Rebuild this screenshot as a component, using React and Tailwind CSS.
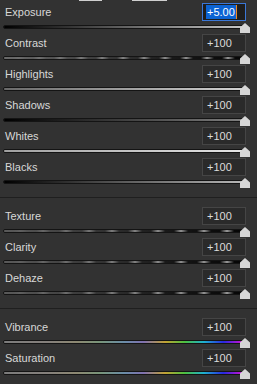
import React from "react";

const tracks = {
  exposure: "bg-[linear-gradient(to_right,#000000,#3a3a3a_30%,#c8c8c8)]",
  contrast:
    "bg-[linear-gradient(to_right,#6a6a6a,rgba(106,106,106,0.2)_70%,rgba(106,106,106,0)),repeating-linear-gradient(to_right,#050505_0px,#050505_8px,#9a9a9a_14px,#050505_21px)]",
  highlights: "bg-[linear-gradient(to_right,#6a6a6a,#d2d2d2)]",
  shadows: "bg-[linear-gradient(to_right,#000000,#808080)]",
  whites: "bg-[linear-gradient(to_right,#a0a0a0,#e6e6e6)]",
  blacks: "bg-[linear-gradient(to_right,#000000,#b8b8b8)]",
  texture:
    "bg-[linear-gradient(to_right,#5a5a5a,rgba(90,90,90,0.2)_70%,rgba(90,90,90,0)),repeating-linear-gradient(to_right,#050505_0px,#050505_9px,#a0a0a0_16px,#050505_23px)]",
  vivid:
    "bg-[linear-gradient(to_right,#7c7c7c_0%,#85807c_18%,#8d8872_30%,#78957a_40%,#6a8ca8_50%,#8070b0_58%,#c2a232_67%,#4cc040_75%,#1eb0d0_83%,#2828e0_91%,#e010d0_100%)]",
};

const Slider = ({ label, value, track, active = false }) => (
  <div className="h-[31px] pl-[5px] pr-[11px]">
    <div className="flex h-[18px] items-center justify-between">
      <span className="text-[11px] leading-none text-[#d8d8d8]">{label}</span>
      {active ? (
        <div className="flex h-[18px] w-[44px] items-center border border-[#3b77d6] bg-[#1e1e1e] pl-[3px]">
          <span className="bg-[#0c63d3] px-px text-[11px] leading-[14px] text-white">{value}</span>
          <span className="h-[14px] w-px bg-[#f08a24]" />
        </div>
      ) : (
        <div className="flex h-[18px] w-[44px] items-center border border-[#454545] bg-[#2a2a2a] pl-[4px]">
          <span className="text-[11px] leading-none text-[#dcdcdc]">{value}</span>
        </div>
      )}
    </div>
    <div className="relative ml-[-2px] mt-[4px] h-[4px] rounded-full border border-[#141414]">
      <div className={`h-full w-full rounded-full ${track}`} />
      <div className="absolute right-[-5px] top-[-3px] h-[10px] w-[10px] bg-[#d6d6d6] [clip-path:polygon(50%_0,100%_45%,100%_100%,0_100%,0_45%)]" />
    </div>
  </div>
);

const Divider = () => (
  <div className="mb-[9px] mt-[8px] h-px bg-[#1f1f1f]" />
);

export default function App() {
  return (
    <div className="h-[384px] w-[257px] overflow-hidden bg-[#323232] font-['Liberation_Sans',Arial,sans-serif]">
      <div className="flex h-[3px]">
        <div className="ml-[79px] h-px w-[23px] bg-[#d0d0d0]" />
        <div className="ml-[30px] h-px w-[35px] bg-[#d0d0d0]" />
      </div>
      <Slider label="Exposure" value="+5.00" track={tracks.exposure} active />
      <Slider label="Contrast" value="+100" track={tracks.contrast} />
      <Slider label="Highlights" value="+100" track={tracks.highlights} />
      <Slider label="Shadows" value="+100" track={tracks.shadows} />
      <Slider label="Whites" value="+100" track={tracks.whites} />
      <Slider label="Blacks" value="+100" track={tracks.blacks} />
      <Divider />
      <Slider label="Texture" value="+100" track={tracks.texture} />
      <Slider label="Clarity" value="+100" track={tracks.texture} />
      <Slider label="Dehaze" value="+100" track={tracks.texture} />
      <Divider />
      <Slider label="Vibrance" value="+100" track={tracks.vivid} />
      <Slider label="Saturation" value="+100" track={tracks.vivid} />
    </div>
  );
}
